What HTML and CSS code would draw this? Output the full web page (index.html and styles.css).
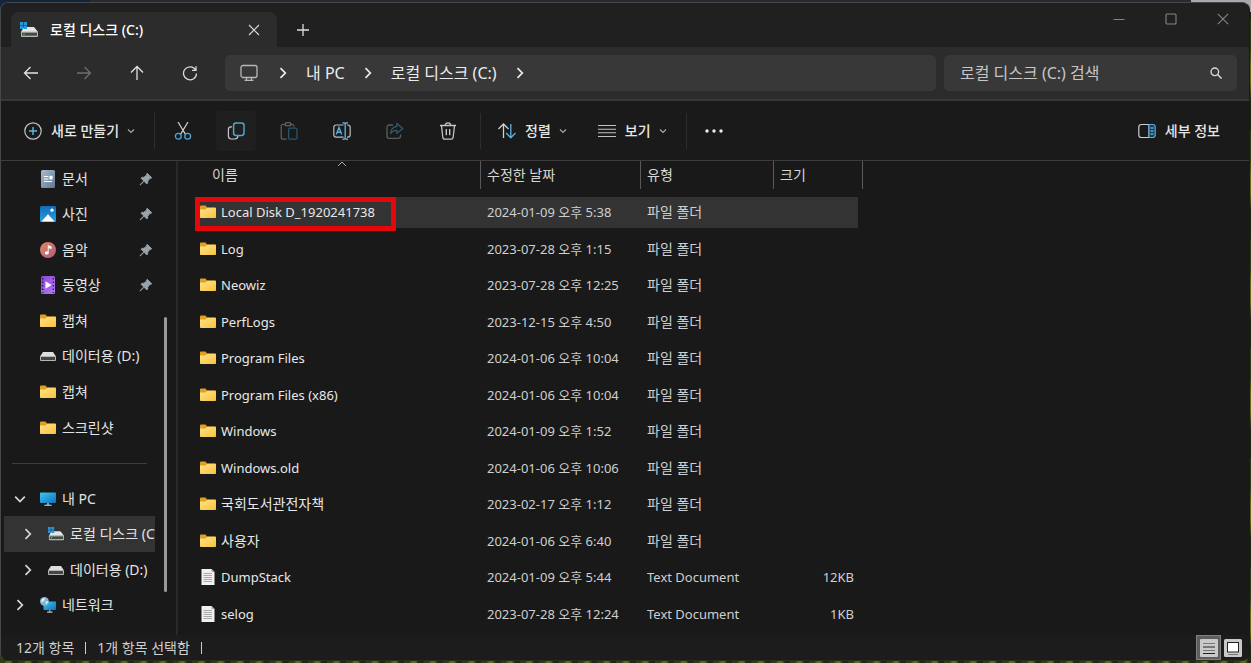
FILE: index.html
```html
<!DOCTYPE html>
<html lang="ko">
<head>
<meta charset="utf-8">
<title>로컬 디스크 (C:)</title>
<link rel="stylesheet" href="styles.css">
</head>
<body>
<svg class="sprite" aria-hidden="true">
  <defs>
    <linearGradient id="gFolder" x1="0" y1="0" x2="1" y2="1"><stop offset="0" stop-color="#ffe28a"/><stop offset="1" stop-color="#f8c33c"/></linearGradient>
    <linearGradient id="gScreen" x1="0" y1="0" x2="1" y2="1"><stop offset="0" stop-color="#3ccbf0"/><stop offset="1" stop-color="#0f6fc0"/></linearGradient>
    <linearGradient id="gDoc" x1="0" y1="0" x2="1" y2="1"><stop offset="0" stop-color="#a9bccd"/><stop offset="1" stop-color="#5f7890"/></linearGradient>
    <linearGradient id="gPic" x1="0" y1="0" x2="0" y2="1"><stop offset="0" stop-color="#0f6cbd"/><stop offset="1" stop-color="#2a9fe0"/></linearGradient>
    <linearGradient id="gMusic" x1="0" y1="0" x2="1" y2="1"><stop offset="0" stop-color="#e08a62"/><stop offset="1" stop-color="#b0587e"/></linearGradient>
    <linearGradient id="gVideo" x1="0" y1="0" x2="1" y2="1"><stop offset="0" stop-color="#8a45d8"/><stop offset="1" stop-color="#b37cf0"/></linearGradient>
  </defs>
  <symbol id="folder" viewBox="0 0 16 16"><path d="M0 2.5Q0 1.5 1 1.5H5.5L7 3.5H15Q16 3.5 16 4.5V8H0Z" fill="#e0a020"/><path d="M0 5.5H5.5L7.2 3.8H15.2Q16 3.8 16 4.6V13.2Q16 14 15.2 14H.8Q0 14 0 13.2Z" fill="url(#gFolder)"/></symbol>
  <symbol id="txt" viewBox="0 0 16 16"><path d="M1.5 0H11.5L14.5 3V16H1.5Z" fill="#f1f1f1"/><path d="M11.5 0V3H14.5Z" fill="#a8a8a8"/><path d="M3.5 4.5H12M3.5 6.5H12M3.5 8.5H12M3.5 10.5H12M3.5 12.5H12" stroke="#a0a0a0" stroke-width=".9"/></symbol>
  <symbol id="drive" viewBox="0 0 16 16"><path d="M3 4H13L16 8.5H0Z" fill="#dedede"/><rect y="8" width="16" height="5" rx="1" fill="#b5b5b5"/><rect x="1" y="9" width="14" height="3" fill="#414643"/></symbol>
  <symbol id="cdrive" viewBox="0 0 18 16"><path d="M4 5H14L18 10H1Z" fill="#e6e6e6"/><rect x="1" y="9.5" width="17" height="5.5" rx="1" fill="#b8b8b8"/><rect x="2" y="10.7" width="15" height="3" fill="#3f4d43"/><circle cx="4" cy="12.2" r=".7" fill="#59d46b"/><path d="M0 0H3.2V3.2H0ZM3.8 0H7V3.2H3.8ZM0 3.8H3.2V7H0ZM3.8 3.8H7V7H3.8Z" fill="#2b95d8"/></symbol>
  <symbol id="doc" viewBox="0 0 16 18"><rect x="1" width="14" height="18" rx="1.5" fill="url(#gDoc)"/><path d="M4 6.5H8.5M4 9H8.5M4 11.5H12" stroke="#fff" stroke-width="1.2"/><rect x="9.5" y="5.8" width="3" height="3.6" fill="#fff"/></symbol>
  <symbol id="pic" viewBox="0 0 16 16"><rect width="16" height="16" rx="1.5" fill="url(#gPic)"/><path d="M1.5 15.5L8 8.2L14.5 15.5Z" fill="#fff"/><circle cx="12" cy="4.2" r="1.6" fill="#fff"/></symbol>
  <symbol id="music" viewBox="0 0 18 18"><circle cx="9" cy="9" r="9" fill="url(#gMusic)"/><ellipse cx="7.6" cy="12.3" rx="2.2" ry="1.9" fill="#fff"/><path d="M9.2 12.5V4L12.6 5.4V7.4L9.8 6.4" fill="#fff" stroke="#fff" stroke-width=".8"/></symbol>
  <symbol id="video" viewBox="0 0 16 18"><rect x="1" width="14" height="18" rx="1.5" fill="url(#gVideo)"/><path d="M2.7 2V17M13.3 2V17" stroke="#3b1470" stroke-width="1.4" stroke-dasharray="1.5 2"/><path d="M5.5 5.3L11.5 9L5.5 12.7Z" fill="#fff"/></symbol>
  <symbol id="pc" viewBox="0 0 16 16"><rect y="1.5" width="16" height="10.5" rx=".8" fill="url(#gScreen)"/><path d="M7 12H9V14H7Z" fill="#7c9cb0"/><path d="M4.5 14.3H11.5" stroke="#b6cad6" stroke-width="1.2"/></symbol>
  <symbol id="net" viewBox="0 0 18 18"><rect x="4" y="5" width="14" height="9.5" rx=".8" fill="url(#gScreen)"/><path d="M8 17H14M11 14.5V17" stroke="#a8c4d4" stroke-width="1.2"/><circle cx="5" cy="5" r="5" fill="#7fb6d4"/><path d="M2 2.2Q4 .8 5.8 1.5Q5.5 3.8 3.8 4.4Q3.4 6.2 2 5.8Q.8 4 2 2.2ZM6.2 5.2L8.8 4.6Q9 7 7 8.4Z" fill="#e2f2f8"/></symbol>
  <symbol id="pin" viewBox="0 0 14 14"><path d="M8.2 1.2L12.8 5.8L11.5 6.6L10.8 6.5L8.7 9.3L8.8 11L7.8 12L5 9.2L1.8 12.6L1 13L1.4 12.2L4.8 9L2 6.2L3 5.2L4.8 5.3L7.5 3.2L7.4 2.5Z" fill="#9ba3a9" stroke="#9ba3a9" stroke-width=".8" stroke-linejoin="round"/></symbol>
  <symbol id="right" viewBox="0 0 12 12"><path d="M3.5 1.2L8.3 6L3.5 10.8" fill="none" stroke="currentColor" stroke-width="1.7"/></symbol>
  <symbol id="down" viewBox="0 0 12 12"><path d="M1.2 3.7L6 8.5L10.8 3.7" fill="none" stroke="currentColor" stroke-width="1.7"/></symbol>
  <symbol id="smalldown" viewBox="0 0 8 8"><path d="M1 2.5L4 5.5L7 2.5" fill="none" stroke="#a8a8a8" stroke-width="1.2"/></symbol>
</svg>

<div class="window">
  <header class="tabstrip">
    <div class="tab">
      <svg class="i18"><use href="#cdrive"/></svg>
      <span class="tab-title">로컬 디스크 (C:)</span>
      <button class="plain" aria-label="탭 닫기"><svg class="i12" viewBox="0 0 12 12"><path d="M1 1L11 11M11 1L1 11" stroke="#d8d8d8" stroke-width="1.2"/></svg></button>
    </div>
    <button class="plain newtab" aria-label="새 탭"><svg class="i12" viewBox="0 0 12 12"><path d="M6 0V12M0 6H12" stroke="#dedede" stroke-width="1.3"/></svg></button>
    <div class="caption">
      <button class="plain" aria-label="최소화"><svg class="i12" viewBox="0 0 12 12"><path d="M.5 6.5H11.5" stroke="#858585"/></svg></button>
      <button class="plain" aria-label="최대화"><svg class="i12" viewBox="0 0 12 12"><rect x="1" y="1" width="10" height="10" rx="1" fill="none" stroke="#858585" stroke-width="1.1"/></svg></button>
      <button class="plain" aria-label="닫기"><svg class="i12" viewBox="0 0 12 12"><path d="M.8 .8L11.2 11.2M11.2 .8L.8 11.2" stroke="#858585" stroke-width="1.1"/></svg></button>
    </div>
  </header>

  <div class="addressbar">
    <button class="plain nav-btn" aria-label="뒤로"><svg class="i16" viewBox="0 0 16 16"><path d="M15 8H1.5M7.5 2L1.5 8L7.5 14" fill="none" stroke="#e2e2e2" stroke-width="1.3"/></svg></button>
    <button class="plain nav-btn" aria-label="앞으로" disabled><svg class="i16" viewBox="0 0 16 16"><path d="M1 8H14.5M8.5 2L14.5 8L8.5 14" fill="none" stroke="#6e6e6e" stroke-width="1.3"/></svg></button>
    <button class="plain nav-btn" aria-label="위로"><svg class="i16" viewBox="0 0 16 16"><path d="M8 15V1.5M2 7.5L8 1.5L14 7.5" fill="none" stroke="#e2e2e2" stroke-width="1.3"/></svg></button>
    <button class="plain nav-btn" aria-label="새로 고침"><svg class="i16" viewBox="0 0 16 16"><path d="M13.6 5A6.5 6.5 0 1 0 14.5 8.4M14 1.3V5.3H10" fill="none" stroke="#d8d8d8" stroke-width="1.3"/></svg></button>
    <nav class="crumbs" aria-label="경로">
      <svg class="i18" viewBox="0 0 18 18"><rect x="1" y="1.5" width="16" height="12" rx="2" fill="none" stroke="#b8b8b8" stroke-width="1.3"/><path d="M6.5 13.5V16M11.5 13.5V16M4.5 16.4H13.5" stroke="#b8b8b8" stroke-width="1.3"/></svg>
      <svg class="i12 sep1"><use href="#right"/></svg>
      <a href="#">내 PC</a>
      <svg class="i12"><use href="#right"/></svg>
      <a href="#">로컬 디스크 (C:)</a>
      <svg class="i12"><use href="#right"/></svg>
    </nav>
    <div class="search">
      <input type="text" aria-label="검색" placeholder="로컬 디스크 (C:) 검색">
      <button class="plain" aria-label="검색 실행"><svg class="i12" viewBox="0 0 12 12"><circle cx="4.8" cy="4.8" r="3.8" fill="none" stroke="#dcdcdc" stroke-width="1.3"/><path d="M7.6 7.6L11.6 11.6" stroke="#dcdcdc" stroke-width="1.4"/></svg></button>
    </div>
  </div>

  <div class="commands">
    <button class="plain cmd"><svg class="i18" viewBox="0 0 18 18"><circle cx="9" cy="9" r="8.2" fill="none" stroke="#c4c4c4" stroke-width="1.2"/><path d="M9 5V13M5 9H13" stroke="#62b5e5" stroke-width="1.4"/></svg><span>새로 만들기</span><svg class="i8"><use href="#smalldown"/></svg></button>
    <span class="vline"></span>
    <div class="tools">
      <button class="plain tool" aria-label="잘라내기"><svg class="i18" viewBox="0 0 18 18"><path d="M4 0L11.5 12.4M14 0L6.5 12.4" stroke="#cfcfcf" stroke-width="1.2"/><circle cx="4.3" cy="14.3" r="2.9" fill="none" stroke="#4ea8d8" stroke-width="1.3"/><circle cx="13.7" cy="14.3" r="2.9" fill="none" stroke="#4ea8d8" stroke-width="1.3"/></svg></button>
      <button class="plain tool active" aria-label="복사"><svg class="i18" viewBox="0 0 18 18"><path d="M5 4.8H4Q1.4 4.8 1.4 7.4V14Q1.4 17 4.4 17H7.8Q10.6 17 11 14" fill="none" stroke="#c9c9c9" stroke-width="1.2"/><rect x="6.6" y="1" width="10.4" height="12.4" rx="2.4" fill="none" stroke="#4fa6d2" stroke-width="1.5"/></svg></button>
      <button class="plain tool" aria-label="붙여넣기" disabled><svg class="i18" viewBox="0 0 18 18"><path d="M5 2.5H2.5Q1.2 2.5 1.2 3.8V15.8Q1.2 17.2 2.5 17.2H6.5M10.5 2.5H12.5Q14 2.5 14 4V4.8" fill="none" stroke="#616161" stroke-width="1.2"/><rect x="5" y=".8" width="6" height="3" rx="1.4" fill="none" stroke="#747474" stroke-width="1.1"/><rect x="8.6" y="6.2" width="8.4" height="11" rx="1.5" fill="none" stroke="#28566e" stroke-width="1.3"/></svg></button>
      <button class="plain tool" aria-label="이름 바꾸기"><svg class="i18" viewBox="0 0 18 18"><path d="M10.5 3H3.2Q.8 3 .8 5.4V12.8Q.8 15.2 3.2 15.2H10.5M14 3H14.8Q17.2 3 17.2 5.4V12.8Q17.2 15.2 14.8 15.2H14" fill="none" stroke="#bdbdbd" stroke-width="1.2"/><path d="M3.2 12.5L6 5.5L8.8 12.5M4.2 10.2H7.8M9.5 .8Q12.2 .8 12.2 2V16Q12.2 17.3 9.5 17.3M15 .8Q12.2 .8 12.2 2M12.2 16Q12.2 17.3 15 17.3" fill="none" stroke="#55aedd" stroke-width="1.4"/></svg></button>
      <button class="plain tool" aria-label="공유" disabled><svg class="i18" viewBox="0 0 18 18"><path d="M7 3H3.4Q1 3 1 5.4V14Q1 16.4 3.4 16.4H12Q14.6 16.4 14.6 13.8V12.6" fill="none" stroke="#5c5c5c" stroke-width="1.3"/><path d="M10.8 1.5L16.8 6.4L10.8 11.2V8.4Q6.6 8.2 4.6 11.6Q5 5.2 10.8 4.4Z" fill="none" stroke="#31596d" stroke-width="1.3" stroke-linejoin="round"/></svg></button>
      <button class="plain tool" aria-label="삭제"><svg class="i18" viewBox="0 0 18 18"><path d="M1 3.5H17M6.3 3.2Q6.3 .8 9 .8Q11.7 .8 11.7 3.2M2.5 3.5L3.8 15.2Q4 17.2 6 17.2H12Q14 17.2 14.2 15.2L15.5 3.5" fill="none" stroke="#c4c4c4" stroke-width="1.3"/><path d="M7.3 7V13.2M10.7 7V13.2" stroke="#c4c4c4" stroke-width="1.4"/></svg></button>
    </div>
    <span class="vline"></span>
    <button class="plain cmd"><svg class="i18" viewBox="0 0 18 18"><path d="M5.5 16V2.5M.5 7L5.5 2L10.5 7" fill="none" stroke="#d0d0d0" stroke-width="1.3"/><path d="M12.8 2V15.5M8.2 11L12.8 15.8L17.5 11" fill="none" stroke="#58b3e6" stroke-width="1.3"/></svg><span>정렬</span><svg class="i8"><use href="#smalldown"/></svg></button>
    <button class="plain cmd view"><svg class="i18" viewBox="0 0 18 18"><path d="M0 3.5H18M0 7.2H18M0 10.8H18M0 14.5H18" stroke="#c2c2c2" stroke-width="1.1"/></svg><span>보기</span><svg class="i8"><use href="#smalldown"/></svg></button>
    <span class="vline"></span>
    <button class="plain more" aria-label="자세히 보기"><svg class="i18" viewBox="0 0 18 18"><g fill="#ededed"><circle cx="2" cy="9" r="1.7"/><circle cx="9" cy="9" r="1.7"/><circle cx="16" cy="9" r="1.7"/></g></svg></button>
    <button class="plain cmd details"><svg class="i18" viewBox="0 0 18 18"><path d="M11 2.5H3.4Q.8 2.5 .8 5V13Q.8 15.5 3.4 15.5H11Z" fill="none" stroke="#cfcfcf" stroke-width="1.2"/><path d="M11 2.5H14.6Q17.2 2.5 17.2 5V13Q17.2 15.5 14.6 15.5H11Z" fill="#173a4d" stroke="#5aaeda" stroke-width="1.2"/><path d="M12.5 6H15.5M12.5 9H15.5M12.5 12H15.5" stroke="#5aaeda" stroke-width="1.3"/></svg><span>세부 정보</span></button>
  </div>

  <div class="body">
    <nav class="sidebar" aria-label="탐색 창">
      <a class="item quick" href="#"><svg class="i16 tall"><use href="#doc"/></svg><span>문서</span><svg class="i14 pin"><use href="#pin"/></svg></a>
      <a class="item quick" href="#"><svg class="i16"><use href="#pic"/></svg><span>사진</span><svg class="i14 pin"><use href="#pin"/></svg></a>
      <a class="item quick" href="#"><svg class="i16 tall"><use href="#music"/></svg><span>음악</span><svg class="i14 pin"><use href="#pin"/></svg></a>
      <a class="item quick" href="#"><svg class="i16 tall"><use href="#video"/></svg><span>동영상</span><svg class="i14 pin"><use href="#pin"/></svg></a>
      <a class="item quick" href="#"><svg class="i16"><use href="#folder"/></svg><span>캡쳐</span></a>
      <a class="item quick" href="#"><svg class="i16"><use href="#drive"/></svg><span>데이터용 (D:)</span></a>
      <a class="item quick" href="#"><svg class="i16"><use href="#folder"/></svg><span>캡쳐</span></a>
      <a class="item quick" href="#"><svg class="i16"><use href="#folder"/></svg><span>스크린샷</span></a>
      <hr>
      <a class="item" href="#"><svg class="i12 twist"><use href="#down"/></svg><svg class="i16"><use href="#pc"/></svg><span>내 PC</span></a>
      <a class="item child selected" href="#" aria-current="page"><svg class="i12 twist"><use href="#right"/></svg><svg class="i16 tall"><use href="#cdrive"/></svg><span>로컬 디스크 (C:)</span></a>
      <a class="item child" href="#"><svg class="i12 twist"><use href="#right"/></svg><svg class="i16"><use href="#drive"/></svg><span>데이터용 (D:)</span></a>
      <a class="item" href="#"><svg class="i12 twist"><use href="#right"/></svg><svg class="i16 tall"><use href="#net"/></svg><span>네트워크</span></a>
      <div class="thumb"></div>
    </nav>

    <main class="files">
      <table>
        <colgroup><col class="c-name"><col class="c-date"><col class="c-type"><col class="c-size"></colgroup>
        <thead><tr>
          <th class="h-name"><button class="plain head">이름<svg class="sort" viewBox="0 0 10 6"><path d="M1 5L5 1L9 5" fill="none" stroke="#a6a6a6"/></svg></button></th>
          <th><button class="plain head">수정한 날짜</button></th><th><button class="plain head">유형</button></th><th><button class="plain head">크기</button></th>
        </tr></thead>
        <tbody>
          <tr class="picked"><td><div class="name"><svg class="i16"><use href="#folder"/></svg>Local Disk D_1920241738</div><span class="marker"></span></td><td>2024-01-09 오후 5:38</td><td class="ko">파일 폴더</td><td></td></tr>
          <tr><td><div class="name"><svg class="i16"><use href="#folder"/></svg>Log</div></td><td>2023-07-28 오후 1:15</td><td class="ko">파일 폴더</td><td></td></tr>
          <tr><td><div class="name"><svg class="i16"><use href="#folder"/></svg>Neowiz</div></td><td>2023-07-28 오후 12:25</td><td class="ko">파일 폴더</td><td></td></tr>
          <tr><td><div class="name"><svg class="i16"><use href="#folder"/></svg>PerfLogs</div></td><td>2023-12-15 오후 4:50</td><td class="ko">파일 폴더</td><td></td></tr>
          <tr><td><div class="name"><svg class="i16"><use href="#folder"/></svg>Program Files</div></td><td>2024-01-06 오후 10:04</td><td class="ko">파일 폴더</td><td></td></tr>
          <tr><td><div class="name"><svg class="i16"><use href="#folder"/></svg>Program Files (x86)</div></td><td>2024-01-06 오후 10:04</td><td class="ko">파일 폴더</td><td></td></tr>
          <tr><td><div class="name"><svg class="i16"><use href="#folder"/></svg>Windows</div></td><td>2024-01-09 오후 1:52</td><td class="ko">파일 폴더</td><td></td></tr>
          <tr><td><div class="name"><svg class="i16"><use href="#folder"/></svg>Windows.old</div></td><td>2024-01-06 오후 10:06</td><td class="ko">파일 폴더</td><td></td></tr>
          <tr><td><div class="name ko"><svg class="i16"><use href="#folder"/></svg>국회도서관전자책</div></td><td>2023-02-17 오후 1:12</td><td class="ko">파일 폴더</td><td></td></tr>
          <tr><td><div class="name ko"><svg class="i16"><use href="#folder"/></svg>사용자</div></td><td>2024-01-06 오후 6:40</td><td class="ko">파일 폴더</td><td></td></tr>
          <tr><td><div class="name"><svg class="i16"><use href="#txt"/></svg>DumpStack</div></td><td>2024-01-09 오후 5:44</td><td>Text Document</td><td>12KB</td></tr>
          <tr><td><div class="name"><svg class="i16"><use href="#txt"/></svg>selog</div></td><td>2023-07-28 오후 12:24</td><td>Text Document</td><td>1KB</td></tr>
        </tbody>
      </table>
    </main>
  </div>

  <footer class="status">
    <span>12개 항목</span><i></i><span>1개 항목 선택함</span><i></i>
    <div class="views">
      <button class="plain on" aria-label="자세히"><svg class="i18" viewBox="0 0 18 18"><rect width="18" height="18" rx="1" fill="#c9c9c9"/><path d="M3 4.5H15M3 11.5H15" stroke="#777"/><path d="M3 8H15M3 14.5H15" stroke="#222"/></svg></button>
      <button class="plain" aria-label="큰 아이콘"><svg class="i18" viewBox="0 0 18 18"><rect width="18" height="18" rx="1.5" fill="#c9c9c9"/><path d="M4 15.5H14" stroke="#777"/><rect x="3.5" y="3.5" width="11" height="9.5" fill="#fff" stroke="#222"/></svg></button>
    </div>
  </footer>
</div>
</body>
</html>
```

FILE: styles.css
```css
* { box-sizing: border-box; }

body {
  margin: 0;
  height: 100vh;
  padding: 2px 1px 2px 0;
  background:
    linear-gradient(90deg, #10243a 0 90px, #2a2b2e 90px calc(100% - 60px), #a9a9ad calc(100% - 60px)) top / 100% 12px no-repeat,
    repeating-linear-gradient(100deg, #2f3d12 0 5px, #5d6a1c 8px 11px, #1d2710 14px 19px);
  color: #e4e4e4;
  font: 13px/18px "Noto Sans", "Noto Sans CJK KR", sans-serif;
}

.sprite { position: absolute; width: 0; height: 0; }
svg { flex: none; display: block; }
a { color: inherit; text-decoration: none; }

.i8 { width: 8px; height: 8px; }
.i12 { width: 12px; height: 12px; }
.i14 { width: 14px; height: 14px; }
.i16 { width: 16px; height: 16px; }
.i18 { width: 18px; height: 18px; }
.i16.tall { height: 18px; }

.plain {
  margin: 0;
  padding: 0;
  border: 0;
  background: none;
  color: inherit;
  font: inherit;
  display: flex;
  align-items: center;
  justify-content: center;
}

.window {
  display: flex;
  flex-direction: column;
  height: 100%;
  overflow: hidden;
  border: 1px solid #44484b;
  border-right-color: #1a1a1a;
  border-bottom-color: #2a2d24;
  border-radius: 8px;
  background: #191919;
}

.tabstrip {
  display: flex;
  height: 44px;
  padding-left: 10px;
  background: #202020;
}
.tab {
  display: flex;
  align-items: center;
  width: 266px;
  margin-top: 9px;
  padding: 0 17px 0 9px;
  border-radius: 8px 8px 0 0;
  background: #2c2c2c;
}
.tab-title {
  flex: 1;
  margin-left: 12px;
  color: #fff;
  font-size: 14px;
  font-weight: 500;
}
.newtab { width: 52px; margin-top: 10px; }
.caption {
  display: flex;
  gap: 40px;
  height: 32px;
  margin-left: auto;
  padding-right: 20px;
}

.addressbar {
  display: flex;
  align-items: center;
  gap: 17px;
  height: 54px;
  padding: 0 12px;
  border-bottom: 2px solid #373737;
  background: #2c2c2c;
}
.nav-btn { width: 36px; height: 36px; }
.crumbs {
  display: flex;
  flex: 1;
  align-items: center;
  gap: 17px;
  height: 36px;
  padding-left: 15px;
  border-radius: 5px;
  background: #383838;
  color: #ececec;
  font-size: 16px;
}
.crumbs .sep1 { margin-left: 2px; }
.search {
  display: flex;
  align-items: center;
  width: 293px;
  height: 36px;
  margin-left: -9px;
  padding: 0 15px 0 16px;
  border-radius: 5px;
  background: #383838;
}
.search input {
  flex: 1;
  min-width: 0;
  padding: 0;
  border: 0;
  outline: 0;
  background: none;
  color: #e4e4e4;
  font: inherit;
  font-size: 16px;
}
.search input::placeholder { color: #c6c6c6; opacity: 1; }

.commands {
  display: flex;
  align-items: center;
  height: 60px;
  padding: 0 29px 0 23px;
  border-bottom: 1px solid #3c3c3c;
  background: #1a1a1a;
  font-size: 14px;
  font-weight: 500;
}
.cmd { color: #e6e6e6; }
.cmd span { margin: 0 8px 0 9px; }
.view { margin-left: 31px; }
.vline { width: 1px; height: 36px; margin: 0 8px 0 19px; background: #2d2d2d; }
.tools { display: flex; gap: 13px; }
.tool { width: 40px; height: 40px; border-radius: 4px; }
.tool.active { background: #1f1f1f; }
.tools + .vline { margin: 0 17px 0 12px; }
.more { margin-left: 10px; }
.details { margin-left: auto; }
.details span { margin-right: 0; }

.body { display: flex; flex: 1; min-height: 0; }
.sidebar {
  position: relative;
  display: grid;
  grid-auto-rows: 1fr;
  width: 177px;
  padding: 0 21px 12px 3px;
  border-right: 2px solid #292929;
}
.item {
  display: flex;
  align-items: center;
  min-width: 0;
  padding-left: 10px;
  overflow: hidden;
  font-size: 14px;
  white-space: nowrap;
}
.item.quick { padding-left: 36px; }
.item.child { padding-left: 18px; }
.item.selected { background: #333; }
.item span { margin-left: 6px; }
.twist { margin-right: 14px; color: #d8d8d8; }
.pin { margin-left: auto; margin-right: 2px; }
.sidebar hr {
  align-self: center;
  width: 135px;
  margin: 0 0 0 8px;
  border: 0;
  border-top: 1px solid #3d3d3d;
}
.thumb {
  position: absolute;
  top: 33%;
  right: 9px;
  bottom: 43px;
  width: 3px;
  border-radius: 2px;
  background: #9a9a9a;
}

.files { flex: 1; padding: 0 0 3px 18px; }
table {
  width: 667px;
  height: 100%;
  border-collapse: separate;
  border-spacing: 0;
  table-layout: fixed;
}
.c-name { width: 285px; }
.c-date { width: 160px; }
.c-type { width: 133px; }
.c-size { width: 89px; }
th { height: 33px; padding: 0; vertical-align: top; font-weight: 400; }
.plain.head {
  position: relative;
  justify-content: flex-start;
  width: 100%;
  height: 28px;
  padding-left: 6px;
  border-right: 1px solid #5a5a5a;
  color: #d6d6d6;
  font-size: 14px;
}
.h-name { padding-left: 8px; }
.h-name .plain.head { padding-left: 8px; }
.sort { position: absolute; top: 0; left: 50%; width: 10px; height: 6px; margin-left: -5px; }

td {
  position: relative;
  padding: 0 0 0 6px;
  border: 0 solid transparent;
  border-width: 3px 0;
  background-clip: padding-box;
  color: #cfcfcf;
  white-space: nowrap;
}
td:first-child { padding-left: 4px; color: #e8e8e8; }
td:last-child { padding-right: 4px; border-right-width: 5px; text-align: right; }
.ko { font-size: 14px; }
.name { display: flex; align-items: center; gap: 5px; }
.picked td { background-color: #333; }
.marker {
  position: absolute;
  top: 0;
  bottom: -3px;
  left: -1px;
  width: 201px;
  border: 5px solid #e60808;
}

.status {
  display: flex;
  align-items: center;
  height: 25px;
  padding-left: 15px;
  background: #1c1c1c;
  color: #cfcfcf;
  font-size: 14px;
}
.status i { width: 1px; height: 12px; margin: 0 11px; background: #cfcfcf; }
.views { display: flex; align-items: center; gap: 3px; margin-left: auto; padding-right: 7px; }
.views .on { width: 25px; height: 25px; background: #5e5e5e; border: 1px solid #808080; }
```
